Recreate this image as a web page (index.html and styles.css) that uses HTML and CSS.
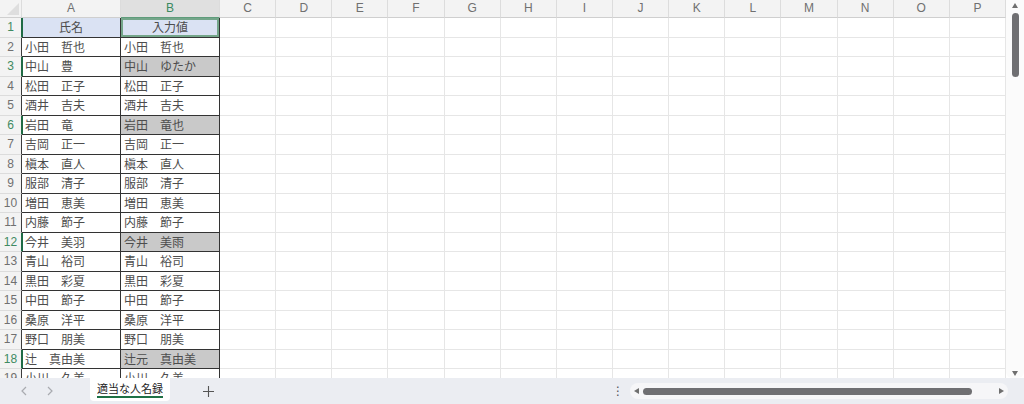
FILE: index.html
```html
<!DOCTYPE html>
<html lang="ja">
<head>
    <meta charset="UTF-8">
    <meta name="viewport" content="width=device-width, initial-scale=1.0">
    <title>適当な人名録</title>
    <link rel="stylesheet" href="styles.css">
</head>
<body>
    <div class="sheet">
        <div class="grid" id="grid"></div>
        <div class="vscroll">
            <span class="tri tri-up"></span>
            <span class="vthumb"></span>
            <span class="tri tri-down"></span>
        </div>
    </div>

    <div class="tabbar">
        <div class="nav">
            <span class="nav-btn">
                <svg width="8" height="10" viewBox="0 0 8 10"><path d="M6 1 L2 5 L6 9" fill="none" stroke="#a9abb0" stroke-width="1.2"/></svg>
            </span>
            <span class="nav-btn">
                <svg width="8" height="10" viewBox="0 0 8 10"><path d="M2 1 L6 5 L2 9" fill="none" stroke="#a9abb0" stroke-width="1.2"/></svg>
            </span>
        </div>
        <div class="sheet-tab"><span>適当な人名録</span></div>
        <div class="add-btn">
            <svg width="11" height="11" viewBox="0 0 11 11"><path d="M5.5 0 V11 M0 5.5 H11" stroke="#555" stroke-width="1.1"/></svg>
        </div>
        <div class="spacer"></div>
        <div class="dots">⋮</div>
        <div class="hscroll">
            <span class="tri tri-left"></span>
            <span class="hthumb"></span>
            <span class="tri tri-right"></span>
        </div>
    </div>

    <script>
        const rows = [
            ['氏名', '入力値'],
            ['小田　哲也', '小田　哲也'],
            ['中山　豊', '中山　ゆたか'],
            ['松田　正子', '松田　正子'],
            ['酒井　吉夫', '酒井　吉夫'],
            ['岩田　竜', '岩田　竜也'],
            ['吉岡　正一', '吉岡　正一'],
            ['槇本　直人', '槇本　直人'],
            ['服部　清子', '服部　清子'],
            ['増田　恵美', '増田　恵美'],
            ['内藤　節子', '内藤　節子'],
            ['今井　美羽', '今井　美雨'],
            ['青山　裕司', '青山　裕司'],
            ['黒田　彩夏', '黒田　彩夏'],
            ['中田　節子', '中田　節子'],
            ['桑原　洋平', '桑原　洋平'],
            ['野口　朋美', '野口　朋美'],
            ['辻　真由美', '辻元　真由美'],
            ['小川　久美', '小川　久美']
        ];
        const letters = 'ABCDEFGHIJKLMNOP'.split('');
        const selected = [1, 3, 6, 12, 18];
        const grid = document.getElementById('grid');

        function cell(cls, text) {
            const div = document.createElement('div');
            div.className = cls;
            if (text) div.textContent = text;
            grid.appendChild(div);
        }

        // column headers
        cell('corner');
        letters.forEach(l => cell(l === 'B' ? 'ch on' : 'ch', l));

        // rows
        rows.forEach((pair, i) => {
            const n = i + 1;
            const on = selected.includes(n);
            cell(on ? 'rh on' : 'rh', String(n));

            let a = 'c t';
            let b = 'c t';
            if (n === 1) {
                a += ' hd';
                b += ' hd act';
            } else if (pair[0] !== pair[1]) {
                b += ' gray';
            }
            if (on) a += ' mark';
            cell(a, pair[0]);
            cell(b, pair[1]);

            for (let k = 2; k < letters.length; k++) cell('c');
        });
    </script>
</body>
</html>
```

FILE: styles.css
```css
html, body {
    margin: 0;
    padding: 0;
}
body {
    width: 1024px;
    height: 404px;
    overflow: hidden;
    background: #fff;
    font-family: "Noto Sans CJK JP", "Noto Sans", sans-serif;
}
.sheet {
    display: flex;
    height: 378px;
}
.grid {
    flex: 1;
    display: grid;
    grid-template-columns: 22px 99px 99px repeat(14, 1fr);
    grid-template-rows: 18px;
    grid-auto-rows: 19.5px;
    overflow: hidden;
}
.grid > div {
    box-sizing: border-box;
    white-space: nowrap;
    overflow: hidden;
}
.corner {
    position: relative;
    background: #f3f3f3;
    border-right: 1px solid #dcdcdc;
    border-bottom: 1px solid #cfcfcf;
}
.corner::after {
    content: "";
    position: absolute;
    right: 2px;
    bottom: 2px;
    border-left: 12px solid transparent;
    border-bottom: 12px solid #dedede;
}
.ch {
    background: #f3f3f3;
    color: #707070;
    font-family: "Liberation Sans", Arial, sans-serif;
    font-size: 12px;
    line-height: 17px;
    text-align: center;
    border-right: 1px solid #dcdcdc;
    border-bottom: 1px solid #cfcfcf;
}
.ch.on {
    background: #e0e0e0;
    color: #3a8a5f;
    border-bottom: 1px solid #5f9c7b;
}
.rh {
    background: #f3f3f3;
    color: #707070;
    font-family: "Liberation Sans", Arial, sans-serif;
    font-size: 12px;
    line-height: 19px;
    text-align: center;
    border-right: 1px solid #3c3c3c;
    border-bottom: 1px solid #dcdcdc;
}
.rh.on {
    color: #3f8a62;
    border-right-color: #1f6b45;
}
.c {
    font-size: 12px;
    line-height: 18px;
    color: #4d4d4d;
    padding: 0 3px;
    border-right: 1px solid #e6e6e6;
    border-bottom: 1px solid #e6e6e6;
}
.c.t {
    border-right-color: #333;
    border-bottom-color: #333;
}
.c.hd {
    background: #dae2f3;
    text-align: center;
}
.c.act {
    box-shadow: inset 0 0 0 2px #74a68a;
}
.c.gray {
    background: #c9c9c9;
}
.c.mark {
    box-shadow: inset 1px 0 0 #1f6b45;
}

/* vertical scrollbar */
.vscroll {
    width: 18px;
    display: flex;
    flex-direction: column;
    align-items: center;
    background: #fbfbfb;
    border-radius: 0 0 6px 6px;
}
.tri {
    display: block;
    width: 0;
    height: 0;
}
.tri-up {
    margin-top: 3px;
    border-left: 3.5px solid transparent;
    border-right: 3.5px solid transparent;
    border-bottom: 5px solid #6f6f6f;
}
.tri-down {
    margin-top: auto;
    margin-bottom: 2px;
    border-left: 3.5px solid transparent;
    border-right: 3.5px solid transparent;
    border-top: 5px solid #6f6f6f;
}
.vthumb {
    margin-top: 5px;
    width: 7px;
    height: 64px;
    border-radius: 4px;
    background: #6f6f72;
}

/* bottom tab bar */
.tabbar {
    display: flex;
    align-items: center;
    height: 26px;
    background: #ebedf2;
}
.nav {
    display: flex;
    margin-left: 11px;
}
.nav-btn {
    width: 26px;
    height: 26px;
    display: flex;
    align-items: center;
    justify-content: center;
}
.sheet-tab {
    align-self: flex-start;
    margin-left: 27px;
    width: 80px;
    height: 23px;
    background: #fff;
    border-radius: 0 0 4px 4px;
    display: flex;
    justify-content: center;
    align-items: center;
}
.sheet-tab span {
    font-size: 11px;
    line-height: 15px;
    color: #222;
    border-bottom: 2px solid #1e7145;
}
.add-btn {
    margin-left: 23px;
    width: 30px;
    height: 26px;
    display: flex;
    align-items: center;
    justify-content: center;
}
.spacer {
    flex: 1;
}
.dots {
    width: 10px;
    margin-right: 8px;
    text-align: center;
    font-family: "DejaVu Sans", sans-serif;
    font-size: 12px;
    color: #555;
}
.hscroll {
    width: 378px;
    height: 16px;
    margin-right: 16px;
    display: flex;
    align-items: center;
    background: #f6f6f8;
    border-radius: 8px;
}
.tri-left {
    margin-left: 4px;
    border-top: 3.5px solid transparent;
    border-bottom: 3.5px solid transparent;
    border-right: 5px solid #6f6f6f;
}
.tri-right {
    margin-left: auto;
    margin-right: 4px;
    border-top: 3.5px solid transparent;
    border-bottom: 3.5px solid transparent;
    border-left: 5px solid #6f6f6f;
}
.hthumb {
    margin-left: 4px;
    width: 329px;
    height: 7px;
    border-radius: 4px;
    background: #6f6f72;
}
```
